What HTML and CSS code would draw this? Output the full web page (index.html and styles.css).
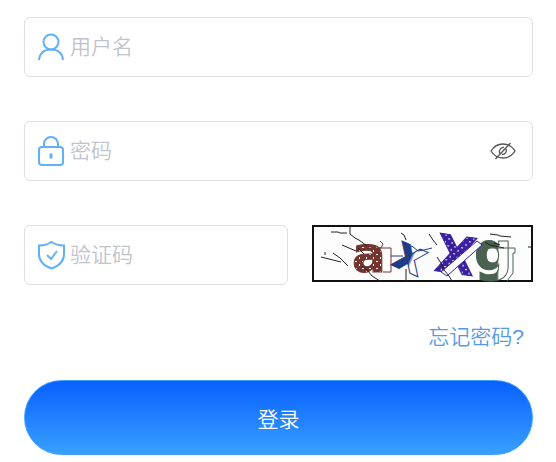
FILE: index.html
```html
<!DOCTYPE html>
<html lang="zh-CN">
<head>
  <meta charset="UTF-8">
  <meta name="viewport" content="width=device-width, initial-scale=1">
  <title>登录</title>
  <link rel="stylesheet" href="styles.css">
</head>
<body>
  <form class="login-form">
    <div class="field">
      <label for="username" aria-label="用户名">
        <svg class="icon" viewBox="0 0 28 30">
          <circle cx="14" cy="10" r="7.500"/>
          <path d="M2 28C2.500 21 7.500 17.500 14 17.500S25.500 21 26 28"/>
        </svg>
      </label>
      <input type="text" id="username" placeholder="用户名">
    </div>

    <div class="field">
      <label for="password" aria-label="密码">
        <svg class="icon" viewBox="0 0 28 30">
          <rect x="2" y="11" width="24" height="18" rx="3"/>
          <path d="M7 11V8a7 7 0 0 1 14 0v3"/>
          <path class="keyhole" d="M14 17.500v5"/>
        </svg>
      </label>
      <input type="password" id="password" placeholder="密码">
      <button type="button" class="eye" aria-label="显示密码" onclick="togglePassword()">
        <svg viewBox="0 0 26 18">
          <path d="M1 9C4 4 8 2 13 2s9 2 12 7c-3 5-7 7-12 7S4 14 1 9z"/>
          <path d="M10 11.500a4 4 0 0 1 4-6M16 7a4 4 0 0 1-4 5.500M20.500 1L5.500 17"/>
        </svg>
      </button>
    </div>

    <div class="code-row">
      <div class="field">
        <label for="code" aria-label="验证码">
          <svg class="icon" viewBox="0 0 28 30">
            <path d="M14.500 2C11 4.500 7 5.500 2 5.500V14c0 7 5 12 12.500 14.500C22 26 27 21 27 14V5.500C22 5.500 18 4.500 14.500 2z"/>
            <path d="M10 15l4 4 6-8"/>
          </svg>
        </label>
        <input type="text" id="code" placeholder="验证码">
      </div>
      <svg class="captcha" viewBox="0 0 221 57" role="img" aria-label="验证码图片">
        <defs>
          <pattern id="brown" width="7" height="7" patternUnits="userSpaceOnUse">
            <rect width="7" height="7" fill="#74352f"/>
            <path d="M1 1h2v1h-2zM5 4h1v2h-1z" fill="#fff"/>
          </pattern>
          <pattern id="purple" width="7" height="7" patternUnits="userSpaceOnUse">
            <rect width="7" height="7" fill="#3a20a0"/>
            <path d="M1 1h2v1h-2zM5 4h1v2h-1z" fill="#fff"/>
          </pattern>
          <linearGradient id="navy">
            <stop offset="50%" stop-color="#203c86"/>
            <stop offset="60%" stop-color="#fdfdfe"/>
          </linearGradient>
          <linearGradient id="green">
            <stop offset="60%" stop-color="#4a6250"/>
            <stop offset="65%" stop-color="#fdfdfe"/>
          </linearGradient>
        </defs>
        <rect class="frame" x="1" y="1" width="219" height="55"/>

        <!-- letters -->
        <text class="letter brown" x="40" y="47" font-size="50">a</text>
        <text class="letter navy" x="82" y="48" font-size="48" transform="rotate(24 100 35)">x</text>
        <text class="letter purple" x="124" y="49" font-size="52" transform="rotate(8 147 30)">X</text>
        <text class="letter green" x="162" y="45" font-size="54">g</text>

        <!-- outlined stroke across the X and the edges of the other letters -->
        <path class="gap" d="M129 47l36-31 5 4-35 31z"/>
        <path class="line brown-line" d="M55 23h14l2-4-3-3M65 23h14v24h-8"/>
        <path class="line navy-line" d="M79 31h12M93 24l7-3 6 5 6-1 8-2"/>
        <path class="line green-line" d="M166 25l8-2h29v5h-2v20l-6 8"/>

        <!-- noise -->
        <path class="line" d="M19 7h7l2 1h7M38 1v8l5 4 4 2 8 6M30 20l7 3 7 3M9 32l8 2 12 3M21 28l7 5 8 8M13 27v3M50 41l6 5 4 5 8 5M46 23l6 6M89 8l3 2 2 5M94 44v12M117 9l4 6 4 5M178 9l8 1 2 1 11 1M173 17l5 3 14 3M182 18l6 2M125 32l4 6 3 7 5 6 3 5M216 22h4"/>
      </svg>
    </div>

    <a class="forgot" href="#">忘记密码?</a>
    <button type="submit" class="submit">登录</button>
  </form>

  <script>
    function togglePassword() {
      const input = document.getElementById('password');
      input.type = input.type === 'password' ? 'text' : 'password';
    }
  </script>
</body>
</html>
```
FILE: styles.css
```css
* {
  box-sizing: border-box;
}

body {
  margin: 0;
  padding: 17px 23px 0 24px;
  background: #fff;
  font-family: "Liberation Sans", "Noto Sans CJK SC", sans-serif;
  font-size: 21px;
  font-weight: 350;
}

input, button {
  font: inherit;
}

.login-form {
  display: flex;
  flex-direction: column;
  gap: 44px;
}

.field {
  display: flex;
  align-items: center;
  min-width: 0;
  height: 60px;
  padding: 0 14px 0 12px;
  border: 1px solid #dcdfe6;
  border-radius: 6px;
}

.field label {
  display: flex;
}

.field input {
  flex: 1;
  min-width: 0;
  height: 100%;
  padding: 0 0 0 5px;
  border: 0;
  outline: 0;
  background: none;
  color: #606266;
}

.field input::placeholder {
  color: #c0c4cc;
}

.icon {
  width: 28px;
  height: 30px;
  fill: none;
  stroke: #62b0f8;
  stroke-width: 2;
}

.keyhole {
  stroke-width: 3;
}

.eye {
  display: flex;
  padding: 0;
  border: 0;
  background: none;
  cursor: pointer;
}

.eye svg {
  width: 30px;
  height: 18px;
  fill: none;
  stroke: #555;
  stroke-width: 1.3;
}

.code-row {
  display: grid;
  grid-template-columns: 264fr 221fr;
  gap: 24px;
  align-items: start;
}

.captcha {
  display: block;
  width: 100%;
}

.frame {
  fill: #fdfdfe;
  stroke: #111;
  stroke-width: 2;
}

.letter {
  font-family: "DejaVu Sans", sans-serif;
  font-weight: bold;
}

.brown {
  fill: url(#brown);
  stroke: #74352f;
}

.navy {
  fill: url(#navy);
  stroke: #203c86;
}

.purple {
  fill: url(#purple);
  stroke: #3a20a0;
}

.green {
  fill: url(#green);
  stroke: #4a6250;
}

.line {
  fill: none;
  stroke: #222;
}

.gap {
  fill: #fdfdfe;
  stroke: #3a20a0;
}

.brown-line {
  stroke: #74352f;
}

.navy-line {
  stroke: #203c86;
}

.green-line {
  stroke: #4a6250;
}

.forgot {
  align-self: flex-end;
  margin: -7px 9px -16px 0;
  color: #559ae2;
  line-height: 30px;
  text-decoration: none;
}

.submit {
  height: 75px;
  border: 1px solid #409eff;
  border-radius: 38px;
  background: linear-gradient(#0860ff, #38a0ff);
  color: #fff;
  cursor: pointer;
}
```
